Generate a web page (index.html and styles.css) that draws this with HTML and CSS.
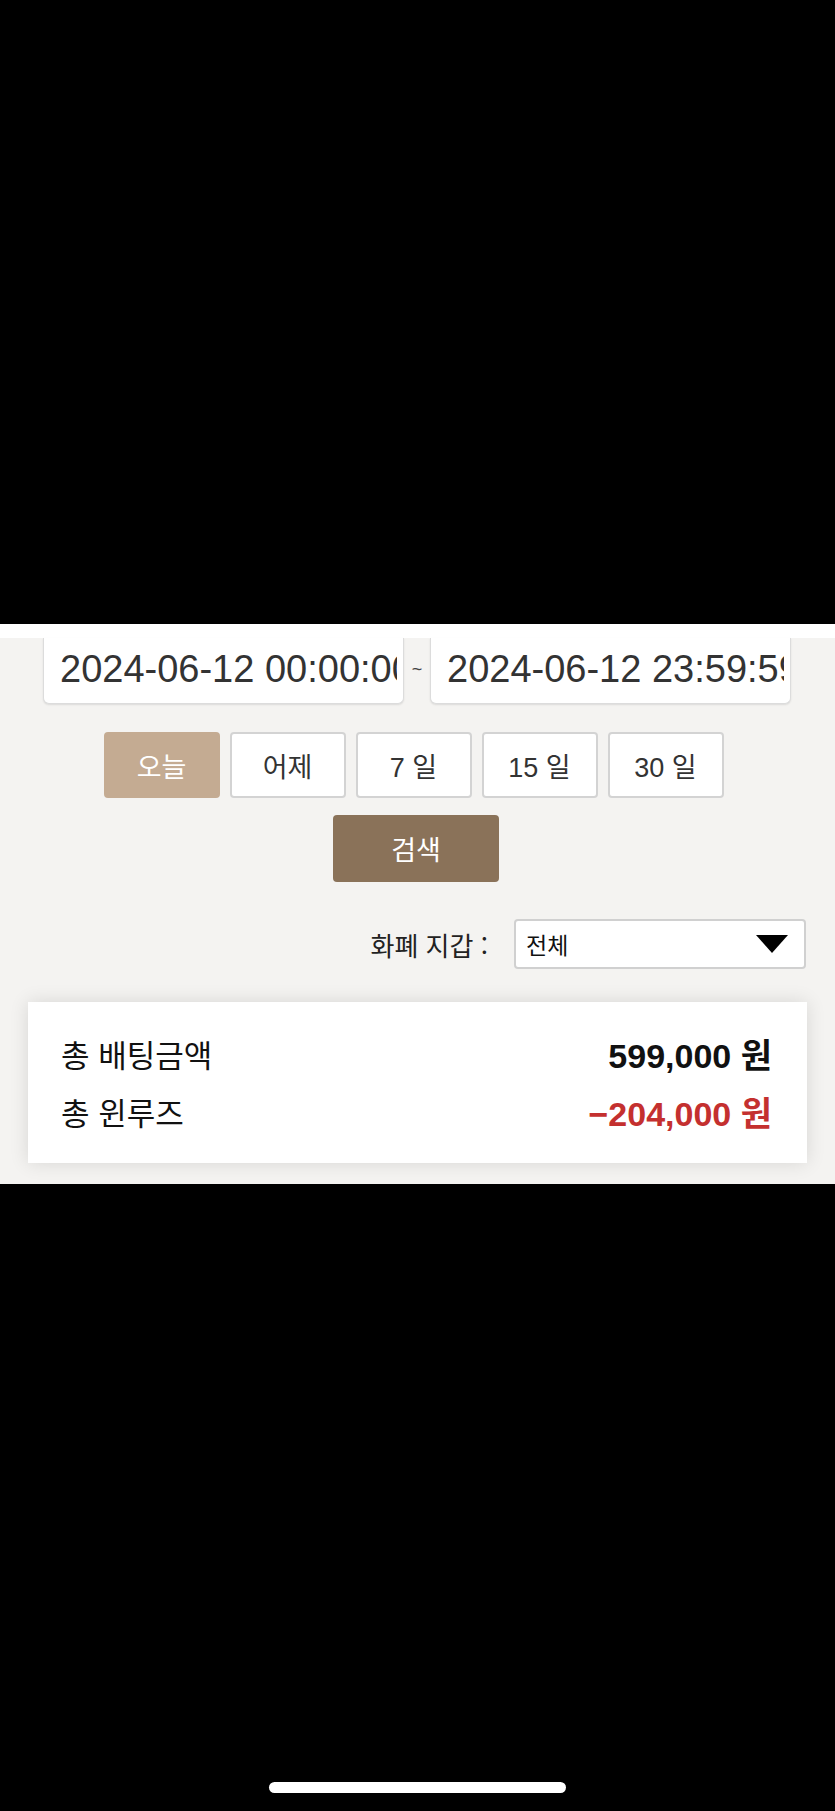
FILE: index.html
```html
<!DOCTYPE html>
<html lang="ko">
<head>
    <meta charset="UTF-8">
    <meta name="viewport" content="width=device-width, initial-scale=1.0">
    <title>배팅 내역</title>
    <link rel="stylesheet" href="styles.css">
</head>
<body>
    <div class="screen-top"></div>
    <div class="panel">
        <div class="panel-strip"></div>
        <div class="filters">
            <div class="date-range">
                <input class="date-input" type="text" value="2024-06-12 00:00:00" readonly>
                <span class="date-sep">~</span>
                <input class="date-input" type="text" value="2024-06-12 23:59:59" readonly>
            </div>
            <div class="quick-days">
                <button class="day-btn active">오늘</button>
                <button class="day-btn">어제</button>
                <button class="day-btn">7 일</button>
                <button class="day-btn">15 일</button>
                <button class="day-btn">30 일</button>
            </div>
            <div class="search-row">
                <button class="search-btn">검색</button>
            </div>
            <div class="wallet-row">
                <span class="wallet-label">화폐 지갑 :</span>
                <div class="wallet-select">
                    <span>전체</span>
                    <span class="caret"></span>
                </div>
            </div>
            <div class="summary">
                <div class="summary-row">
                    <span class="summary-label">총 배팅금액</span>
                    <span class="summary-value">599,000 원</span>
                </div>
                <div class="summary-row">
                    <span class="summary-label">총 윈루즈</span>
                    <span class="summary-value minus">−204,000 원</span>
                </div>
            </div>
        </div>
    </div>
    <div class="screen-bottom">
        <div class="home-bar"></div>
    </div>
</body>
</html>
```

FILE: styles.css
```css
body {
    margin: 0;
    padding: 0;
    background-color: #000;
    font-family: "Liberation Sans", "Noto Sans CJK KR", sans-serif;
    color: #222;
    width: 835px;
    height: 1811px;
    overflow: hidden;
}

.screen-top {
    height: 624px;
    background-color: #000;
}

.panel {
    background-color: #f4f3f1;
}

.panel-strip {
    height: 14px;
    background-color: #fff;
}

.filters {
    padding: 0 28px 21px 28px;
}

.date-range {
    display: flex;
    align-items: center;
    padding: 0 16px 0 15px;
}

.date-input {
    width: 361px;
    height: 66px;
    box-sizing: border-box;
    margin: 0;
    padding: 0 6px 2px 16px;
    border: 1px solid #dcdcdc;
    border-top: none;
    border-radius: 0 0 6px 6px;
    box-shadow: 0 1px 2px rgba(0, 0, 0, 0.1);
    background-color: #fff;
    font-family: "Liberation Sans", sans-serif;
    font-size: 38px;
    color: #333;
    outline: none;
}

.date-sep {
    width: 26px;
    text-align: center;
    font-size: 18px;
    color: #444;
    margin-top: -4px;
}

.quick-days {
    display: flex;
    justify-content: center;
    gap: 10px;
    margin-top: 28px;
    padding-right: 8px;
}

.day-btn {
    width: 116px;
    height: 66px;
    background-color: #fff;
    border: 2px solid #d3d3d3;
    border-radius: 4px;
    font-family: "Liberation Sans", "Noto Sans CJK KR", sans-serif;
    font-size: 27px;
    color: #333;
    padding: 0;
}

.day-btn.active {
    background-color: #c4ab92;
    border-color: #c4ab92;
    color: #fff;
}

.search-row {
    display: flex;
    justify-content: center;
    margin-top: 17px;
    padding-right: 3px;
}

.search-btn {
    width: 166px;
    height: 67px;
    background-color: #8a7259;
    border: none;
    border-radius: 4px;
    font-family: "Noto Sans CJK KR", sans-serif;
    font-size: 27px;
    color: #fff;
    padding: 0;
}

.wallet-row {
    display: flex;
    justify-content: flex-end;
    align-items: center;
    gap: 26px;
    margin-top: 37px;
    margin-right: 1px;
}

.wallet-label {
    font-family: "Noto Sans CJK KR", sans-serif;
    font-size: 26px;
    color: #222;
}

.wallet-select {
    width: 292px;
    height: 50px;
    box-sizing: border-box;
    display: flex;
    justify-content: space-between;
    align-items: center;
    padding: 0 16px 0 10px;
    background-color: #fff;
    border: 2px solid #d0d0d0;
    border-radius: 4px;
    font-family: "Noto Sans CJK KR", sans-serif;
    font-size: 23px;
    color: #111;
}

.caret {
    width: 0;
    height: 0;
    border-left: 16px solid transparent;
    border-right: 16px solid transparent;
    border-top: 18px solid #000;
}

.summary {
    margin-top: 33px;
    background-color: #fff;
    padding: 22px 35px 23px 33px;
    box-shadow: 0 0 18px rgba(0, 0, 0, 0.12);
}

.summary-row {
    display: flex;
    justify-content: space-between;
    align-items: center;
    height: 58px;
}

.summary-label {
    font-family: "Noto Sans CJK KR", sans-serif;
    font-size: 31px;
    color: #111;
}

.summary-value {
    font-size: 34px;
    font-weight: 600;
    color: #111;
}

.summary-value.minus {
    color: #c4302f;
}

.screen-bottom {
    height: 626px;
    display: flex;
    justify-content: center;
    align-items: flex-end;
    padding-bottom: 17px;
    box-sizing: border-box;
}

.home-bar {
    width: 297px;
    height: 11px;
    border-radius: 6px;
    background-color: #fff;
}
```
